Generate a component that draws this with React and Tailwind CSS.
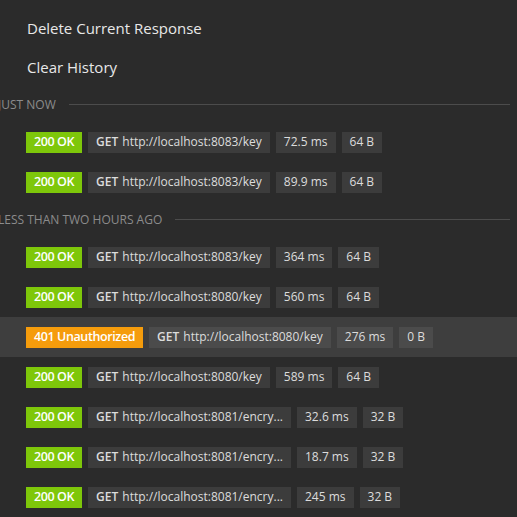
import React from 'react';

const groups = [
  {
    label: 'Just now',
    rows: [
      { status: '200 OK', ok: true, url: 'http://localhost:8083/key', time: '72.5 ms', size: '64 B' },
      { status: '200 OK', ok: true, url: 'http://localhost:8083/key', time: '89.9 ms', size: '64 B' },
    ],
  },
  {
    label: 'Less than two hours ago',
    rows: [
      { status: '200 OK', ok: true, url: 'http://localhost:8083/key', time: '364 ms', size: '64 B' },
      { status: '200 OK', ok: true, url: 'http://localhost:8080/key', time: '560 ms', size: '64 B' },
      { status: '401 Unauthorized', ok: false, url: 'http://localhost:8080/key', time: '276 ms', size: '0 B', active: true },
      { status: '200 OK', ok: true, url: 'http://localhost:8080/key', time: '589 ms', size: '64 B' },
      { status: '200 OK', ok: true, url: 'http://localhost:8081/encry...', time: '32.6 ms', size: '32 B' },
      { status: '200 OK', ok: true, url: 'http://localhost:8081/encry...', time: '18.7 ms', size: '32 B' },
      { status: '200 OK', ok: true, url: 'http://localhost:8081/encry...', time: '245 ms', size: '32 B' },
    ],
  },
];

function Row({ r }) {
  const box = r.active ? 'bg-[#4b4b4b]' : 'bg-[#3c3c3c]';
  return (
    <div className={`h-[40px] flex items-center gap-[6px] pl-[26px] ${r.active ? 'bg-[#3e3e3e]' : ''}`}>
      <span className={`h-[21px] flex items-center px-[8px] text-[12.5px] font-semibold tracking-[-0.4px] text-white ${r.ok ? 'bg-[#7ec70a]' : 'bg-[#f59c0c]'}`}>
        {r.status}
      </span>
      <span className={`h-[21px] flex items-center px-[8px] ${box}`}>
        <span className="font-semibold mr-[4px]">GET</span>{r.url}
      </span>
      <span className={`h-[21px] flex items-center px-[8px] ${box}`}>{r.time}</span>
      <span className={`h-[21px] flex items-center px-[8px] ${box}`}>{r.size}</span>
    </div>
  );
}

export default function App() {
  return (
    <div
      className="w-[517px] h-[517px] overflow-hidden bg-[#2b2b2b] text-[#dcdcdc] text-[12px] pt-[9px]"
      style={{ fontFamily: '"Open Sans", "Noto Sans", sans-serif' }}
    >
      {/* menu */}
      <div className="h-[39px] flex items-center pl-[27px] text-[15px] text-[#e8e8e8]">Delete Current Response</div>
      <div className="h-[39px] flex items-center pl-[27px] text-[15px] text-[#e8e8e8]">Clear History</div>

      {groups.map((g) => (
        <div key={g.label}>
          <div className="h-[35px] flex items-center -ml-[2px] pr-[7px]">
            <span className="uppercase text-[12px] text-[#8c8c8c] whitespace-nowrap">{g.label}</span>
            <div className="flex-1 h-px bg-[#4c4c4c] ml-[13px]" />
          </div>
          {g.rows.map((r, j) => (
            <Row key={j} r={r} />
          ))}
        </div>
      ))}
    </div>
  );
}
